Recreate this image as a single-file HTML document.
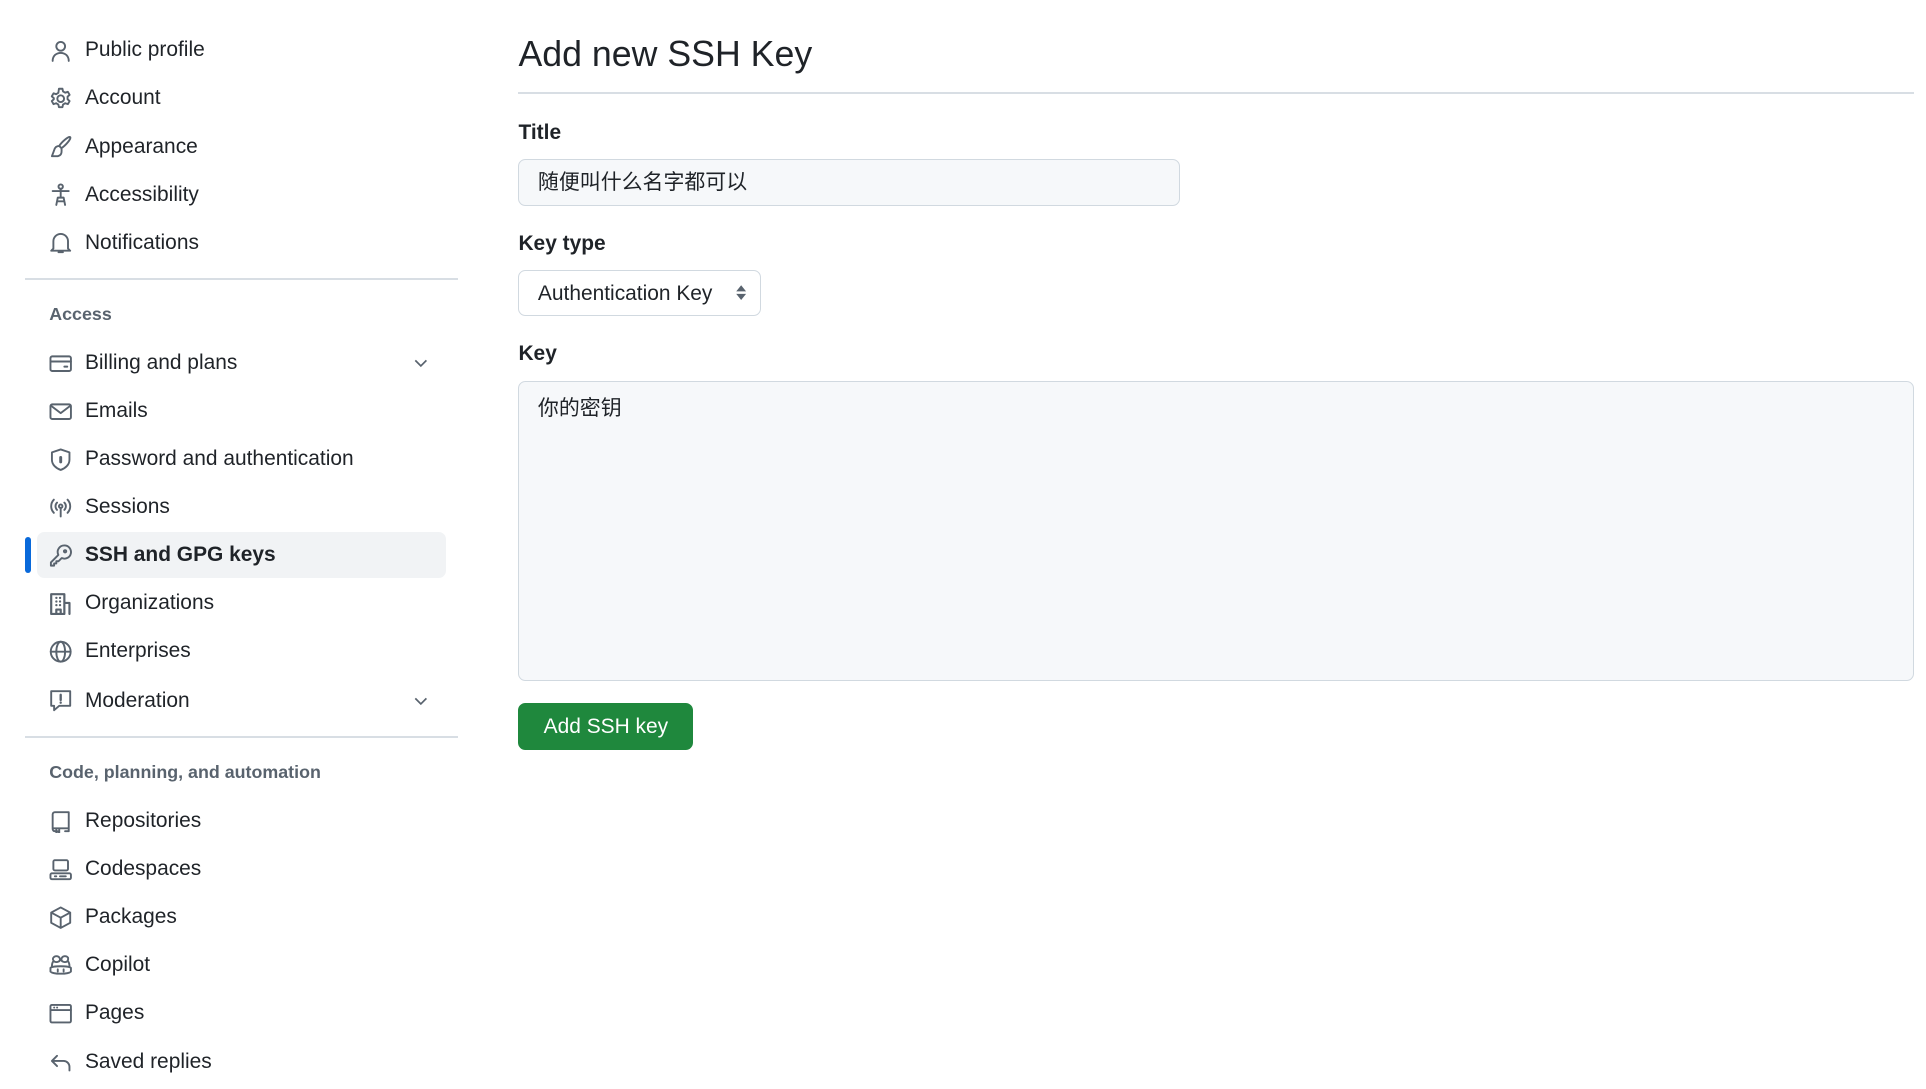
<!DOCTYPE html>
<html><head><meta charset="utf-8"><style>
html,body{margin:0;padding:0;background:#fff}
body{width:1564px;height:884px;zoom:1.2315;overflow:hidden;position:relative;font-family:"Liberation Sans","Noto Sans CJK SC",sans-serif;color:#1f2328}
.it{position:absolute;left:40px;height:24px;display:flex;align-items:center;font-size:17px;white-space:nowrap;margin-top:1px}
.it svg{width:19px;height:19px;margin-right:10px;fill:none;stroke:#59636e;stroke-width:1.3;stroke-linecap:round;stroke-linejoin:round}
.hd{position:absolute;left:40px;font-size:14.5px;font-weight:bold;color:#59636e;margin-top:1px}
.sep{position:absolute;left:20px;width:352px;height:1px;background:#d8dee4}
.chev{position:absolute;left:334px;width:16px;height:16px;fill:none;stroke:#59636e;stroke-width:1.4}
.lbl{position:absolute;left:421px;font-size:17px;font-weight:bold;margin-top:1px}
.box{position:absolute;box-sizing:border-box;border:1px solid #d1d9e0;border-radius:6px;background:#f6f8fa;font-size:17px;padding-left:15px}
</style></head><body>
<div class="it" style="top:28px"><svg viewBox="0 0 16 16"><circle cx="8" cy="5" r="3"/><path d="M2.5 15c0-3.5 2.5-5.5 5.5-5.5s5.5 2 5.5 5.5"/></svg>Public profile</div>
<div class="it" style="top:67px"><svg viewBox="0 0 16 16"><circle cx="8" cy="8" r="2.3"/><path d="M6.8 1.2h2.4l.4 1.8 1.5.9 1.8-.6 1.2 2.1-1.4 1.2v1.8l1.4 1.2-1.2 2.1-1.8-.6-1.5.9-.4 1.8H6.8l-.4-1.8-1.5-.9-1.8.6-1.2-2.1 1.4-1.2V7.6L1.9 6.4l1.2-2.1 1.8.6 1.5-.9z"/></svg>Account</div>
<div class="it" style="top:106px"><svg viewBox="0 0 16 16"><path d="M14.5 1.5c-1-1-6 3.5-7.5 6l1.5 1.5c2.5-1.5 7-6.5 6-7.5zM7 7.5c-2 0-3 1-3.5 3L2 14.5h4c2-.5 3-1.5 2.5-5.5"/></svg>Appearance</div>
<div class="it" style="top:145px"><svg viewBox="0 0 16 16"><circle cx="8" cy="2.5" r="1.5"/><path d="M2.5 5.5h11M8 4v6M5 15l1-5h4l1 5M5.5 12.5h5"/></svg>Accessibility</div>
<div class="it" style="top:184px"><svg viewBox="0 0 16 16"><path d="M3 12V7a5 5 0 0 1 10 0v5l1.5 1.5h-13zM6.5 14.5h3"/></svg>Notifications</div>
<div class="sep" style="top:226px"></div>
<div class="hd" style="top:246px">Access</div>
<div class="it" style="top:282px"><svg viewBox="0 0 16 16"><rect x="1" y="3" width="14" height="10" rx="1.2"/><path d="M1 6.5h14M10.5 10h2"/></svg>Billing and plans</div>
<svg class="chev" style="top:287px" viewBox="0 0 16 16"><path d="M3.5 6l4.5 4.5 4.5-4.5"/></svg>
<div class="it" style="top:321px"><svg viewBox="0 0 16 16"><rect x="1" y="3" width="14" height="10" rx="1.2"/><path d="M1.5 4l6.5 5 6.5-5"/></svg>Emails</div>
<div class="it" style="top:360px"><svg viewBox="0 0 16 16"><path d="M8 1l6 2v5c0 3.5-3 6-6 7-3-1-6-3.5-6-7V3z"/><path d="M8 6.5v3" stroke-width="2"/></svg>Password and authentication</div>
<div class="it" style="top:399px"><svg viewBox="0 0 16 16"><circle cx="8" cy="7" r="1.2"/><path d="M8 8v6M5.5 4.5a3.5 3.5 0 0 0 0 5M10.5 4.5a3.5 3.5 0 0 1 0 5M3.3 2.5a6.5 6.5 0 0 0 0 9M12.7 2.5a6.5 6.5 0 0 1 0 9"/></svg>Sessions</div>
<div style="position:absolute;left:30px;top:432px;width:332px;height:37px;background:#f1f3f5;border-radius:6px"></div>
<div style="position:absolute;left:20px;top:436px;width:5px;height:29px;background:#0969da;border-radius:3px"></div>
<div class="it" style="top:438px;font-weight:bold"><svg viewBox="0 0 16 16"><path d="M10.5 1a4.5 4.5 0 1 1-1.8 8.6L6.5 11.8H5v1.5H3.5v1.5H1.3V12.6l5.1-5.1A4.5 4.5 0 0 1 10.5 1z"/><circle cx="11" cy="5" r=".8"/></svg>SSH and GPG keys</div>
<div class="it" style="top:477px"><svg viewBox="0 0 16 16"><path d="M1.5 15V1.5h9V15zM10.5 7.5h3.5V15M5 4h.1M7.5 4h.1M5 6.5h.1M7.5 6.5h.1M5 9h.1M7.5 9h.1M5 15v-3h3v3" stroke-width="1.5"/></svg>Organizations</div>
<div class="it" style="top:516px"><svg viewBox="0 0 16 16"><circle cx="8" cy="8" r="6.8"/><ellipse cx="8" cy="8" rx="3" ry="6.8"/><path d="M1.2 8h13.6"/></svg>Enterprises</div>
<div class="it" style="top:556px"><svg viewBox="0 0 16 16"><path d="M1.5 1.5h13v10H7l-3.5 3v-3h-2z"/><path d="M8 4v3.5M8 9.3v.1" stroke-width="1.6"/></svg>Moderation</div>
<svg class="chev" style="top:561px" viewBox="0 0 16 16"><path d="M3.5 6l4.5 4.5 4.5-4.5"/></svg>
<div class="sep" style="top:598px"></div>
<div class="hd" style="top:618px">Code, planning, and automation</div>
<div class="it" style="top:654px"><svg viewBox="0 0 16 16"><path d="M13.5 12.5V1.5H4a1.5 1.5 0 0 0-1.5 1.5v10a1.5 1.5 0 0 0 1.5 1.5h.5M11 14.5h2.5v-2H2.5M5 12.5v3l1-1 1 1v-3"/></svg>Repositories</div>
<div class="it" style="top:693px"><svg viewBox="0 0 16 16"><rect x="3" y="1.5" width="10" height="7" rx="1"/><rect x="1" y="10.5" width="14" height="4" rx="1"/><path d="M4 12.5h1M7.5 12.5h4"/></svg>Codespaces</div>
<div class="it" style="top:732px"><svg viewBox="0 0 16 16"><path d="M8 1l6.5 3.5v7L8 15l-6.5-3.5v-7zM1.5 4.5L8 8l6.5-3.5M8 8v7"/></svg>Packages</div>
<div class="it" style="top:771px"><svg viewBox="0 0 16 16"><path d="M2 8.5c0-2 .5-3 1-3.5M14 8.5c0-2-.5-3-1-3.5M1 9.5v2.5c2 2 12 2 14 0V9.5c-1.5-1.5-12.5-1.5-14 0z"/><path d="M3 2.5c1-1.5 4-1.5 4.5 1 .3 2-3 2.5-4 1.5S2.5 3 3 2.5zM13 2.5c-1-1.5-4-1.5-4.5 1-.3 2 3 2.5 4 1.5s.5-2 .5-2.5zM6 10.5v1.5M10 10.5v1.5"/></svg>Copilot</div>
<div class="it" style="top:810px"><svg viewBox="0 0 16 16"><rect x="1" y="2" width="14" height="12" rx="1"/><path d="M1 5.5h14M3.5 3.8h.1M5.5 3.8h.1"/></svg>Pages</div>
<div class="it" style="top:849px"><svg viewBox="0 0 16 16"><path d="M5.5 4L2 7.5 5.5 11M2 7.5h8a4 4 0 0 1 4 4V14"/></svg>Saved replies</div>

<div style="position:absolute;left:421px;top:25px;font-size:29px;line-height:38px">Add new SSH Key</div>
<div style="position:absolute;left:421px;top:75px;width:1133px;height:1px;background:#d8dee4"></div>
<div class="lbl" style="top:97px">Title</div>
<div class="box" style="left:421px;top:129px;width:537px;height:38px;line-height:37px">随便叫什么名字都可以</div>
<div class="lbl" style="top:187px">Key type</div>
<div class="box" style="left:421px;top:219px;width:197px;height:38px;line-height:37px;background:#fff">Authentication Key<svg style="position:absolute;right:10px;top:11px" width="10" height="14" viewBox="0 0 10 14"><path d="M5 1l4 5H1zM5 13l4-5H1z" fill="#59636e"/></svg></div>
<div class="lbl" style="top:277px">Key</div>
<div class="box" style="left:421px;top:309px;width:1133px;height:244px;padding-top:11px;line-height:22px">你的密钥</div>
<div style="position:absolute;left:421px;top:571px;width:142px;height:38px;background:#1f883d;border-radius:6px;color:#fff;font-size:17px;line-height:39px;text-align:center">Add SSH key</div>
</body></html>
